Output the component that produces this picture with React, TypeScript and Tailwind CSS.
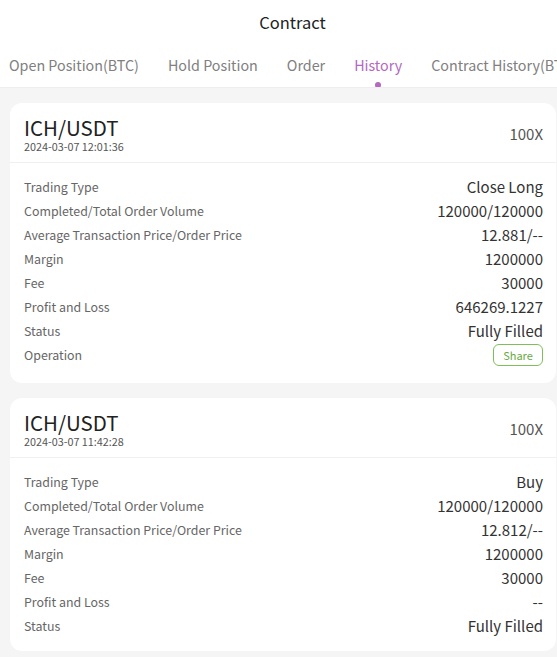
import React from "react";

const font = { fontFamily: '"Noto Sans CJK SC", "Noto Sans", sans-serif' };

type Row = { label: string; value: string; share?: boolean };

function Card({ time, rows, pb }: { time: string; rows: Row[]; pb: string }) {
  return (
    <div className={`ml-[10px] mr-[1px] bg-white rounded-[12px] ${pb}`}>
      <div className="flex items-center justify-between pl-[14px] pr-[13px] pt-[12px] pb-[9px] border-b border-[#f0f0f0]">
        <div className="flex flex-col">
          <div className="text-[20.5px] leading-[24px] text-[#222]">ICH/USDT</div>
          <div className="text-[10.8px] leading-[14px] text-[#555]">{time}</div>
        </div>
        <div className="text-[15px] text-[#555]">100X</div>
      </div>
      <div className="pl-[14px] pr-[13px] pt-[12px] flex flex-col">
        {rows.map((r) => (
          <div key={r.label} className="flex items-center justify-between h-[24px]">
            <span className="text-[12.4px] text-[#666]">{r.label}</span>
            {r.share ? (
              <span className="h-[22px] w-[50px] flex items-center justify-center rounded-[6px] border border-[#7fbf5a] text-[11px] text-[#6aaa45]">
                Share
              </span>
            ) : (
              <span className="text-[15px] text-[#333]">{r.value}</span>
            )}
          </div>
        ))}
      </div>
    </div>
  );
}

export default function App() {
  const tabs = ["Open Position(BTC)", "Hold Position", "Order", "History", "Contract History(BTC)"];
  return (
    <div className="w-[557px] h-[657px] overflow-hidden bg-[#f5f5f5]" style={font}>
      <div className="bg-white">
        <div className="h-[44px] flex items-center justify-center pl-[28px] text-[16.5px] text-[#222]">Contract</div>
        <div className="h-[44px] flex items-start pl-[9px] gap-[29px] whitespace-nowrap border-b border-[#eeeeee] overflow-hidden">
          {tabs.map((t) => (
            <div key={t} className="relative h-[42px] flex items-center shrink-0">
              <span className={`text-[14.3px] ${t === "History" ? "text-[#b468c0]" : "text-[#808080]"}`}>{t}</span>
              {t === "History" && (
                <span className="absolute left-1/2 -translate-x-1/2 top-[38px] w-[6px] h-[6px] rounded-full bg-[#b468c0]" />
              )}
            </div>
          ))}
        </div>
      </div>
      <div className="pt-[15px] flex flex-col gap-[15px]">
        <Card
          time="2024-03-07 12:01:36"
          pb="pb-[16px]"
          rows={[
            { label: "Trading Type", value: "Close Long" },
            { label: "Completed/Total Order Volume", value: "120000/120000" },
            { label: "Average Transaction Price/Order Price", value: "12.881/--" },
            { label: "Margin", value: "1200000" },
            { label: "Fee", value: "30000" },
            { label: "Profit and Loss", value: "646269.1227" },
            { label: "Status", value: "Fully Filled" },
            { label: "Operation", value: "", share: true },
          ]}
        />
        <Card
          time="2024-03-07 11:42:28"
          pb="pb-[13px]"
          rows={[
            { label: "Trading Type", value: "Buy" },
            { label: "Completed/Total Order Volume", value: "120000/120000" },
            { label: "Average Transaction Price/Order Price", value: "12.812/--" },
            { label: "Margin", value: "1200000" },
            { label: "Fee", value: "30000" },
            { label: "Profit and Loss", value: "--" },
            { label: "Status", value: "Fully Filled" },
          ]}
        />
      </div>
    </div>
  );
}
